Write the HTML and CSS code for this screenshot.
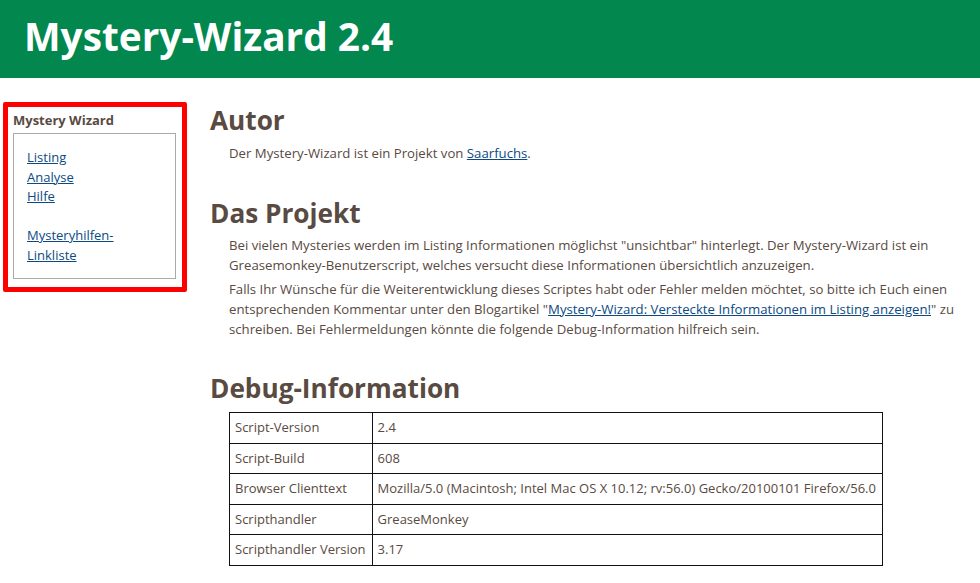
FILE: index.html
```html
<!DOCTYPE html>
<html lang="de">
<head>
  <meta charset="UTF-8">
  <meta name="viewport" content="width=device-width, initial-scale=1.0">
  <title>Mystery-Wizard 2.4</title>
  <link rel="stylesheet" href="styles.css">
</head>
<body>
  <div class="header">
    <h1>Mystery-Wizard 2.4</h1>
  </div>
  <div class="page">
    <div class="sidebar">
      <div class="sidebar-title">Mystery Wizard</div>
      <div class="sidebar-box">
        <a href="#">Listing</a><br>
        <a href="#">Analyse</a><br>
        <a href="#">Hilfe</a><br>
        <br>
        <a href="#">Mysteryhilfen-Linkliste</a>
      </div>
    </div>
    <div class="content">
      <h2>Autor</h2>
      <p>Der Mystery-Wizard ist ein Projekt von <a href="#">Saarfuchs</a>.</p>

      <h2>Das Projekt</h2>
      <p>Bei vielen Mysteries werden im Listing Informationen möglichst "unsichtbar" hinterlegt. Der Mystery-Wizard ist ein Greasemonkey-Benutzerscript, welches versucht diese Informationen übersichtlich anzuzeigen.</p>
      <p>Falls Ihr Wünsche für die Weiterentwicklung dieses Scriptes habt oder Fehler melden möchtet, so bitte ich Euch einen entsprechenden Kommentar unter den Blogartikel "<a href="#">Mystery-Wizard: Versteckte Informationen im Listing anzeigen!</a>" zu schreiben. Bei Fehlermeldungen könnte die folgende Debug-Information hilfreich sein.</p>

      <h2 class="debug-title">Debug-Information</h2>
      <table class="debug">
        <tr><td>Script-Version</td><td>2.4</td></tr>
        <tr><td>Script-Build</td><td>608</td></tr>
        <tr><td>Browser Clienttext</td><td>Mozilla/5.0 (Macintosh; Intel Mac OS X 10.12; rv:56.0) Gecko/20100101 Firefox/56.0</td></tr>
        <tr><td>Scripthandler</td><td>GreaseMonkey</td></tr>
        <tr><td>Scripthandler Version</td><td>3.17</td></tr>
      </table>
    </div>
  </div>
</body>
</html>
```

FILE: styles.css
```css
body {
  margin: 0;
  font-family: 'Open Sans', sans-serif;
  font-size: 13px;
  color: #594a42;
  background-color: white;
}

a {
  color: #0b4a84;
}

.header {
  background-color: #02874f;
  height: 78px;
  padding-left: 24px;
  box-sizing: border-box;
}

.header h1 {
  margin: 0;
  color: white;
  font-size: 38.8px;
  font-weight: bold;
  line-height: 72px;
}

.page {
  display: flex;
  align-items: flex-start;
}

.sidebar {
  width: 184px;
  box-sizing: border-box;
  margin: 24px 23px 0 3px;
  border: 5px solid #ff0000;
  border-radius: 2px;
  padding: 4px 6px 8px 5px;
}

.sidebar-title {
  font-weight: bold;
  line-height: 18px;
  margin-bottom: 4px;
}

.sidebar-box {
  border: 1px solid #aaaaaa;
  padding: 14px 30px 13px 13px;
  line-height: 19.5px;
}

.content {
  flex: 1;
  padding-top: 26px;
}

h2 {
  margin: 34px 0 6px 0;
  font-size: 26.2px;
  font-weight: bold;
  line-height: 32px;
}

h2:first-child {
  margin-top: 0;
  margin-bottom: 7px;
}

p {
  margin: 0 0 4px 19px;
  font-size: 13.2px;
  line-height: 20px;
}

.debug-title {
  margin-top: 33px;
  margin-bottom: 8px;
}

.debug {
  margin-left: 19px;
  border-collapse: collapse;
}

.debug td {
  border: 1px solid #111111;
  padding: 5px 6px 5px 5px;
  line-height: 19.5px;
  white-space: nowrap;
}
```
